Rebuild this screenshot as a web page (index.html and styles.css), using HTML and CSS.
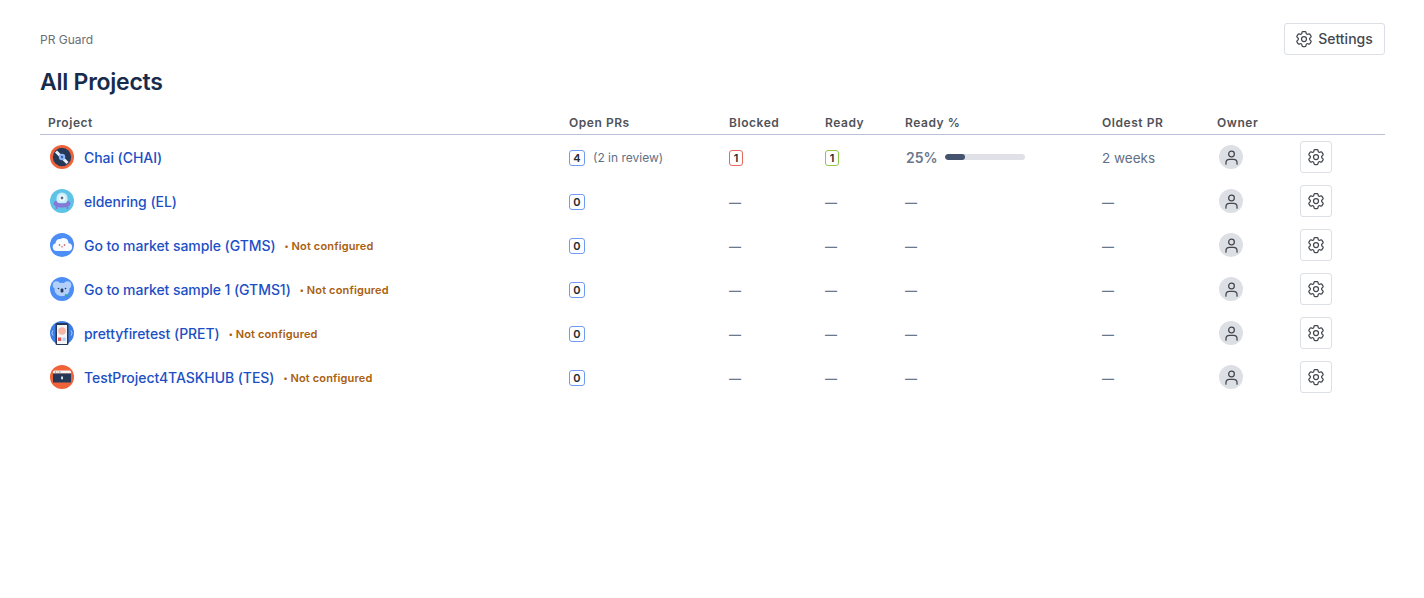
FILE: index.html
```html
<!DOCTYPE html>
<html lang="en">
<head>
<meta charset="utf-8">
<title>PR Guard</title>
<link rel="stylesheet" href="styles.css">
</head>
<body>
<svg class="defs" width="0" height="0" aria-hidden="true">
  <symbol id="gear" viewBox="0 0 24 24"><g fill="none" stroke="currentColor" stroke-width="1.5" stroke-linecap="round" stroke-linejoin="round"><path d="M9.594 3.94c.09-.542.56-.94 1.11-.94h2.593c.55 0 1.02.398 1.11.94l.213 1.281c.063.374.313.686.645.87.074.04.147.083.22.127.325.196.72.257 1.075.124l1.217-.456a1.125 1.125 0 0 1 1.37.49l1.296 2.247a1.125 1.125 0 0 1-.26 1.431l-1.003.827c-.293.241-.438.613-.43.992a7.723 7.723 0 0 1 0 .255c-.008.378.137.75.43.991l1.004.827c.424.35.534.955.26 1.43l-1.298 2.247a1.125 1.125 0 0 1-1.369.491l-1.217-.456c-.355-.133-.75-.072-1.076.124a6.47 6.47 0 0 1-.22.128c-.331.183-.581.495-.644.869l-.213 1.281c-.09.543-.56.94-1.11.94h-2.594c-.55 0-1.019-.398-1.11-.94l-.213-1.281c-.062-.374-.312-.686-.644-.87a6.52 6.52 0 0 1-.22-.127c-.325-.196-.72-.257-1.076-.124l-1.217.456a1.125 1.125 0 0 1-1.369-.49l-1.297-2.247a1.125 1.125 0 0 1 .26-1.431l1.004-.827c.292-.24.437-.613.43-.991a6.932 6.932 0 0 1 0-.255c.007-.38-.138-.751-.43-.992l-1.004-.827a1.125 1.125 0 0 1-.26-1.43l1.297-2.247a1.125 1.125 0 0 1 1.37-.491l1.216.456c.356.133.751.072 1.076-.124.072-.044.146-.086.22-.128.332-.183.582-.495.644-.869l.214-1.28Z"/><path d="M15 12a3 3 0 1 1-6 0 3 3 0 0 1 6 0Z"/></g></symbol>
  <symbol id="user" viewBox="0 0 24 24"><g fill="none" stroke="currentColor" stroke-width="1.6" stroke-linecap="round"><circle cx="12" cy="7.600" r="3.600"/><path d="M5 20.500v-1.600c0-2.600 2-4.400 4.400-4.400h5.200c2.400 0 4.400 1.800 4.400 4.400v1.600"/></g></symbol>
  <symbol id="av-chai" viewBox="0 0 24 24"><circle cx="12" cy="12" r="12" fill="#f0623a"/><circle cx="12" cy="12" r="9.200" fill="#253858"/><path d="M6 6.500 17.500 18" stroke="#e8eef8" stroke-width="3"/><circle cx="12" cy="12" r="3.200" fill="#8fb8f5"/><circle cx="12" cy="12" r="1.200" fill="#3a5fb0"/></symbol>
  <symbol id="av-elden" viewBox="0 0 24 24"><circle cx="12" cy="12" r="12" fill="#5ec3e6"/><path d="M6.500 9a5.500 5.500 0 0 1 11 0v5h-11Z" fill="#c9eef9"/><path d="M3.500 14.500c0-1.500 1.500-2.500 3-2.800.5 2 2.500 2.800 5.500 2.800s5-.8 5.500-2.800c1.500.3 3 1.300 3 2.800 0 2.500-3.500 4-8.500 4s-8.500-1.500-8.500-4Z" fill="#8777d9"/><path d="M6.500 17.500v2.500M17.500 17.500v2.500" stroke="#8777d9" stroke-width="1.800"/><circle cx="12" cy="9" r="3" fill="#f4fbff"/><circle cx="12" cy="9" r="1.400" fill="#5a6b8c"/></symbol>
  <symbol id="av-cloud" viewBox="0 0 24 24"><circle cx="12" cy="12" r="12" fill="#4c8df6"/><path d="M6.500 18a4 4 0 0 1-1-7.800 4.200 4.200 0 0 1 5-4.200 5 5 0 0 1 8 4.200A3.900 3.900 0 0 1 18 18Z" fill="#f7faff"/><circle cx="9.500" cy="12" r=".8" fill="#c0392b"/><circle cx="14.500" cy="12" r=".8" fill="#c0392b"/><path d="M11 13.500q1 1.200 2 0" fill="none" stroke="#e0584a" stroke-width=".8"/></symbol>
  <symbol id="av-koala" viewBox="0 0 24 24"><circle cx="12" cy="12" r="12" fill="#4c8df6"/><circle cx="6.500" cy="8" r="3.800" fill="#b3d0fb"/><circle cx="17.500" cy="8" r="3.800" fill="#b3d0fb"/><ellipse cx="12" cy="12.500" rx="7.500" ry="6.800" fill="#b3d0fb"/><rect x="10.600" y="11.500" width="2.800" height="4" rx="1.200" fill="#253858"/><circle cx="8.500" cy="11.500" r=".8" fill="#253858"/><circle cx="15.500" cy="11.500" r=".8" fill="#253858"/><path d="M15 17.500l3 2" stroke="#2aa8a0" stroke-width="1.800"/></symbol>
  <symbol id="av-phone" viewBox="0 0 24 24"><circle cx="12" cy="12" r="12" fill="#3d7de8"/><path d="M3 9.500 1.800 12 3 14.500M21 9.500 22.200 12 21 14.500" fill="none" stroke="#b3d0fb" stroke-width=".9"/><rect x="5.500" y="2" width="13" height="22" rx="1.500" fill="#253858"/><rect x="7" y="4" width="10" height="19" fill="#f4f5f7"/><circle cx="12" cy="10" r="3.800" fill="#f7b5a5"/><rect x="8" y="16.500" width="3.200" height="3.500" fill="#e5554a"/><rect x="12.500" y="16.500" width="3.200" height="3.500" fill="#b3d0fb"/></symbol>
  <symbol id="av-test" viewBox="0 0 24 24"><circle cx="12" cy="12" r="12" fill="#f0623a"/><path d="M3 8.500V7a1.500 1.500 0 0 1 1.500-1.500h15A1.500 1.500 0 0 1 21 7v1.500Z" fill="#f4f5f7"/><path d="M3 8.500h18v9H3Z" fill="#253858"/><circle cx="5.500" cy="7" r=".7" fill="#f0623a"/><circle cx="7.700" cy="7" r=".7" fill="#f2b632"/><circle cx="9.900" cy="7" r=".7" fill="#4c8df6"/><rect x="11.200" y="11.500" width="1.700" height="2.800" fill="#f4f5f7"/></symbol>
</svg>

<main class="page">
  <header class="top">
    <div>
      <div class="crumb">PR Guard</div>
      <h1 class="title">All Projects</h1>
    </div>
    <button class="btn btn-settings" type="button"><svg class="btn-icon"><use href="#gear"/></svg>Settings</button>
  </header>

  <table class="grid">
    <colgroup>
      <col class="c-project"><col class="c-open"><col class="c-blocked"><col class="c-ready"><col class="c-pct"><col class="c-oldest"><col class="c-owner"><col class="c-action">
    </colgroup>
    <thead>
      <tr><th>Project</th><th>Open PRs</th><th>Blocked</th><th>Ready</th><th>Ready %</th><th>Oldest PR</th><th>Owner</th><th></th></tr>
    </thead>
    <tbody>
      <tr>
        <td><div class="proj"><svg class="avatar"><use href="#av-chai"/></svg><a class="link">Chai (CHAI)</a></div></td>
        <td><span class="count">4</span><span class="review">(2 in review)</span></td>
        <td><span class="count red">1</span></td>
        <td><span class="count green">1</span></td>
        <td><div class="pct"><span class="pct-num">25%</span><span class="track"><span class="fill"></span></span></div></td>
        <td class="age">2 weeks</td>
        <td><span class="owner"><svg class="owner-icon"><use href="#user"/></svg></span></td>
        <td><button class="btn btn-gear" type="button"><svg class="btn-icon"><use href="#gear"/></svg></button></td>
      </tr>
      <tr>
        <td><div class="proj"><svg class="avatar"><use href="#av-elden"/></svg><a class="link">eldenring (EL)</a></div></td>
        <td><span class="count">0</span></td>
        <td class="dash">—</td><td class="dash">—</td><td class="dash">—</td><td class="dash">—</td>
        <td><span class="owner"><svg class="owner-icon"><use href="#user"/></svg></span></td>
        <td><button class="btn btn-gear" type="button"><svg class="btn-icon"><use href="#gear"/></svg></button></td>
      </tr>
      <tr>
        <td><div class="proj"><svg class="avatar"><use href="#av-cloud"/></svg><a class="link">Go to market sample (GTMS)</a><span class="warn"><span class="warn-dot">•</span>Not configured</span></div></td>
        <td><span class="count">0</span></td>
        <td class="dash">—</td><td class="dash">—</td><td class="dash">—</td><td class="dash">—</td>
        <td><span class="owner"><svg class="owner-icon"><use href="#user"/></svg></span></td>
        <td><button class="btn btn-gear" type="button"><svg class="btn-icon"><use href="#gear"/></svg></button></td>
      </tr>
      <tr>
        <td><div class="proj"><svg class="avatar"><use href="#av-koala"/></svg><a class="link">Go to market sample 1 (GTMS1)</a><span class="warn"><span class="warn-dot">•</span>Not configured</span></div></td>
        <td><span class="count">0</span></td>
        <td class="dash">—</td><td class="dash">—</td><td class="dash">—</td><td class="dash">—</td>
        <td><span class="owner"><svg class="owner-icon"><use href="#user"/></svg></span></td>
        <td><button class="btn btn-gear" type="button"><svg class="btn-icon"><use href="#gear"/></svg></button></td>
      </tr>
      <tr>
        <td><div class="proj"><svg class="avatar"><use href="#av-phone"/></svg><a class="link">prettyfiretest (PRET)</a><span class="warn"><span class="warn-dot">•</span>Not configured</span></div></td>
        <td><span class="count">0</span></td>
        <td class="dash">—</td><td class="dash">—</td><td class="dash">—</td><td class="dash">—</td>
        <td><span class="owner"><svg class="owner-icon"><use href="#user"/></svg></span></td>
        <td><button class="btn btn-gear" type="button"><svg class="btn-icon"><use href="#gear"/></svg></button></td>
      </tr>
      <tr>
        <td><div class="proj"><svg class="avatar"><use href="#av-test"/></svg><a class="link">TestProject4TASKHUB (TES)</a><span class="warn"><span class="warn-dot">•</span>Not configured</span></div></td>
        <td><span class="count">0</span></td>
        <td class="dash">—</td><td class="dash">—</td><td class="dash">—</td><td class="dash">—</td>
        <td><span class="owner"><svg class="owner-icon"><use href="#user"/></svg></span></td>
        <td><button class="btn btn-gear" type="button"><svg class="btn-icon"><use href="#gear"/></svg></button></td>
      </tr>
    </tbody>
  </table>
</main>
</body>
</html>
```
FILE: styles.css
```css
* { box-sizing: border-box; }
html, body { margin: 0; background: #fff; }
body { font-family: Inter, "Liberation Sans", sans-serif; color: #172b4d; }
.defs { position: absolute; }
.page { padding: 23px 39px 0 40px; }
.top { display: flex; justify-content: space-between; align-items: flex-start; height: 89px; }
.crumb { font-size: 12px; line-height: 16px; margin-top: 9px; color: #6b6e76; }
.title { margin: 20px 0 0; font-size: 23px; line-height: 28px; font-weight: 600; color: #172b4d; letter-spacing: -0.25px; }
.btn { display: inline-flex; align-items: center; justify-content: center; background: #fff; border: 1px solid #dcdfe4; border-radius: 3px; color: #44474f; font: inherit; padding: 0; }
.btn-settings { width: 101px; height: 32px; font-size: 14px; font-weight: 500; gap: 4px; padding: 0 2px 1px 0; }
.btn-gear { width: 32px; height: 32px; display: flex; }
.btn-icon { width: 20px; height: 20px; }
.grid { width: 1345px; table-layout: fixed; border-collapse: separate; border-spacing: 0; }
.c-project { width: 521px; }
.c-open { width: 160px; }
.c-blocked { width: 96px; }
.c-ready { width: 80px; }
.c-pct { width: 197px; }
.c-oldest { width: 115px; }
.c-owner { width: 83px; }
.c-action { width: 93px; }
th { height: 23px; padding: 0 8px 3px; text-align: left; vertical-align: bottom; font-size: 12px; line-height: 16px; font-weight: 600; letter-spacing: 0.55px; color: #505258; border-bottom: 1px solid #b8bfd6; }
td { height: 44px; padding: 0 8px; font-size: 13px; vertical-align: middle; }
.proj { display: flex; align-items: center; padding-left: 2px; }
.avatar { width: 24px; height: 24px; flex: none; margin-right: 10px; }
.link { font-size: 14px; font-weight: 450; letter-spacing: -0.06px; color: #1d4fc4; white-space: nowrap; }
.warn { margin-left: 9px; padding-top: 2px; font-size: 11px; font-weight: 600; letter-spacing: 0.15px; color: #a9600f; white-space: nowrap; }
.warn-dot { display: inline-block; width: 7px; font-size: 8px; vertical-align: 1px; }
.count { display: inline-flex; align-items: center; justify-content: center; min-width: 16px; height: 16px; padding: 0 3px; border: 1px solid #6f9cf0; border-radius: 3px; font-size: 11px; font-weight: 600; color: #292a2e; vertical-align: middle; }
.count.red { min-width: 14px; border-color: #e5685c; }
.count.green { min-width: 14px; border-color: #94c748; }
.review { margin-left: 8px; font-size: 12px; color: #626f86; vertical-align: middle; }
.age { padding-top: 2px; color: #626f86; font-size: 13.500px; }
.dash { padding-top: 3px; color: #6b778c; font-size: 12px; font-weight: 600; }
.pct { display: flex; align-items: center; gap: 8px; }
.pct-num { padding: 1px 0 0 1px; margin-right: -1px; font-size: 14px; font-weight: 600; color: #6b778c; }
.track { display: block; width: 80px; height: 6px; border-radius: 3px; background: #dfe1e6; overflow: hidden; }
.fill { display: block; width: 25%; height: 100%; border-radius: 3px; background: #44546f; }
.owner { display: flex; align-items: center; justify-content: center; width: 24px; height: 24px; margin-left: 2px; border-radius: 50%; background: #dcdfe4; color: #44474f; }
.owner-icon { width: 19px; height: 19px; }
```
